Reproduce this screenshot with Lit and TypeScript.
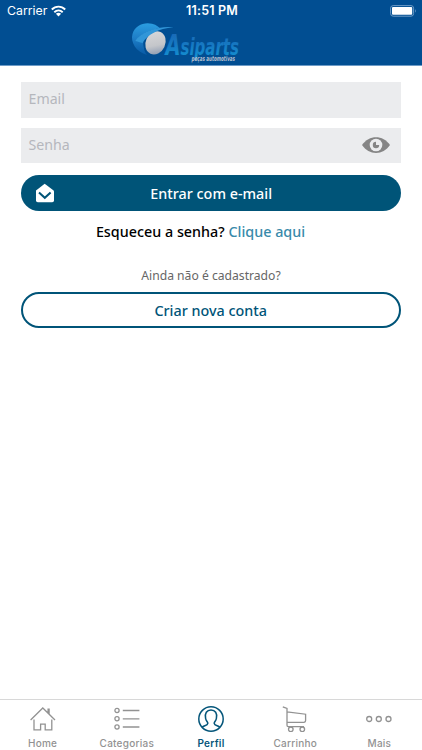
import { LitElement, html, css, svg } from "lit";
import { customElement } from "lit/decorators.js";

const icons = {
  home: svg`<path d="M.6 14 12.800 2 25 14M18.100 7V3.200h1V8.200M4 13.500v10.300h6.600v-5.600h4.600v5.600h6.600V13.500"/>`,
  list: svg`<circle cx="3" cy="4.5" r="2.1"/><circle cx="3" cy="12.8" r="2.1"/><circle cx="3" cy="21" r="2.1"/><path d="M8.800 4.500h16.600M8.800 12.800h16.600M8.800 21h16.600"/>`,
  user: svg`<circle cx="13" cy="13" r="12.2"/><path d="M4.200 21.200c1.500-1.700 5.300-1.500 5.600-3.900.1-1.300-1.700-2.300-2.200-5C6.600 7.300 8.700 4 13 4s6.400 3.300 5.400 8.300c-.5 2.700-2.300 3.700-2.200 5 .3 2.400 4.100 2.200 5.600 3.900"/>`,
  cart: svg`<path d="M.8 .8 5 2.400V19.300Q5 20.600 6.300 20.600H22M5 5.800 23.600 8.200V14.600Q23.600 16.200 22 16.400H5"/><circle cx="8.800" cy="23.300" r="2.300"/><circle cx="20.300" cy="23.300" r="2.300"/>`,
  more: svg`<circle cx="3.200" cy="13" r="2.500"/><circle cx="12.800" cy="13" r="2.500"/><circle cx="22.500" cy="13" r="2.500"/>`,
};

const tabs = [
  { key: "home", label: "Home", icon: icons.home },
  { key: "categories", label: "Categorias", icon: icons.list },
  { key: "profile", label: "Perfil", icon: icons.user },
  { key: "cart", label: "Carrinho", icon: icons.cart },
  { key: "more", label: "Mais", icon: icons.more },
];

@customElement("app-root")
export class AppRoot extends LitElement {
  static styles = css`
    :host {
      display: flex;
      flex-direction: column;
      height: 100vh;
      background: #fff;
      font-family: "Noto Sans", "Open Sans", sans-serif;
    }
    * { box-sizing: border-box; }
    svg { display: block; flex: none; }
    header {
      height: 66px;
      background: #014e92;
      border-bottom: 1px solid #6d9bc7;
      color: #fff;
      flex: none;
    }
    .status {
      height: 21px;
      display: grid;
      grid-template-columns: 1fr auto 1fr;
      align-items: center;
      padding: 1px 5px 0 7px;
      font: 12.300px/20px Inter, sans-serif;
    }
    .carrier { display: flex; align-items: center; gap: 4px; }
    .carrier svg { margin-top: -1px; }
    .time { font-weight: 600; font-size: 12.500px; letter-spacing: 0.200px; }
    .battery { justify-self: end; }
    .logo { margin: 0 auto; position: relative; left: -25px; overflow: visible; }
    main { flex: 1; padding: 16px 21px 0; display: flex; flex-direction: column; }
    .field {
      height: 35.500px;
      background: #ebecee;
      color: #b5b7bd;
      font-size: 14.200px;
      display: flex;
      align-items: center;
      justify-content: space-between;
      padding: 0 10px 2px 7.500px;
      margin-bottom: 10px;
    }
    .field svg { margin-top: 2px; }
    .button {
      height: 36px;
      border-radius: 18px;
      display: flex;
      align-items: center;
      justify-content: center;
      font-size: 14.350px;
      font-weight: 500;
      width: 380.400px;
    }
    .primary {
      background: #005478;
      color: #fff;
      margin-top: 2px;
      display: grid;
      grid-template-columns: 48px 1fr 48px;
      text-align: center;
    }
    .mail { margin-left: 14px; margin-top: -1px; }
    .outline { border: 2px solid #005478; color: #005478; margin-top: 7px; padding-right: 1px; }
    .forgot { margin: 10px 21px 0 0; text-align: center; font-size: 14.350px; line-height: 21px; font-weight: 500; }
    .link { color: #398aaa; }
    .hint { margin-top: 25px; text-align: center; font-size: 12.150px; line-height: 18px; color: #666; }
    nav {
      height: 51px;
      border-top: 1px solid #d8d8d8;
      display: grid;
      grid-template-columns: repeat(5, 84.200px);
      justify-content: center;
      flex: none;
    }
    .tab {
      display: flex;
      flex-direction: column;
      align-items: center;
      padding-top: 6px;
      gap: 4px;
      color: #929292;
      font: 500 10px/14px Inter, sans-serif;
      letter-spacing: 0.250px;
    }
    .active { color: #05567a; font-weight: 600; }
    .glyph { fill: none; stroke: currentColor; stroke-width: 1.300; }
    .active .glyph { stroke-width: 1.500; }
    .brand {
      font-family: "DejaVu Sans Condensed", "DejaVu Sans", sans-serif;
      font-stretch: condensed;
      font-weight: 700;
      font-style: italic;
    }
  `;

  render() {
    return html`
      <header>
        <div class="status">
          <div class="carrier">
            <span>Carrier</span>
            <svg width="15" height="12" viewBox="0 0 15 12" fill="none" stroke="#fff" stroke-width="1.900">
              <path d="M.8 4.500C4.600.6 10.400.6 14.200 4.500M3.300 7.200c2.500-2.400 5.900-2.400 8.400 0"/>
              <path fill="#fff" stroke="none" d="M4.900 8.700q2.600-2 5.200 0L7.500 11.400z"/>
            </svg>
          </div>
          <span class="time">11:51 PM</span>
          <svg class="battery" width="27" height="12" viewBox="0 0 27 12">
            <rect x=".6" y=".6" width="23" height="10.600" rx="2.600" fill="none" stroke="#6d9bc7"/>
            <rect x="2" y="2" width="20.200" height="7.800" rx="1" fill="#fff"/>
            <path d="M25 4q1.800 1.900 0 3.800z" fill="#6d9bc7"/>
          </svg>
        </div>
        <svg class="logo" width="110" height="44" viewBox="0 0 110 44">
          <defs>
            <linearGradient id="blue" x2="0" y2="1"><stop stop-color="#2b9de0"/><stop offset=".5" stop-color="#1d7cc6"/><stop offset="1" stop-color="#0759a4"/></linearGradient>
            <linearGradient id="word" x2="0" y2="1"><stop stop-color="#1b62b0"/><stop offset=".5" stop-color="#1678c2"/><stop offset="1" stop-color="#1398d6"/></linearGradient>
            <linearGradient id="silver" x1=".2" y1="0" x2=".8" y2="1"><stop stop-color="#d8d8da"/><stop offset=".6" stop-color="#c4c6ca"/><stop offset="1" stop-color="#8797b0"/></linearGradient>
          </defs>
          <path fill="url(#blue)" d="M16 34C5 31-.8 21 1.500 13 4 4.500 13 .8 21 2.800c4.500 1.100 8 3.700 9.500 6.700L24 12C17 13 12.500 17 12.500 23c0 4 1 8 3.500 11z"/>
          <path fill="#014e92" d="M4 20C12 11 25 5.500 42.500 6 36 8 34 11 35 16L25 33C17 35 12 29 12.500 21z"/>
          <ellipse cx="24.500" cy="21.800" rx="9.800" ry="12" fill="url(#silver)" transform="rotate(25 24.500 21.800)"/>
          <path d="M4 20C10 11 25 5 42.500 6 27 8 17 13 11.500 22z" fill="#3196d8"/>
          <g class="brand">
            <text x="34.500" y="33.500" textLength="73.500" lengthAdjust="spacingAndGlyphs" font-size="22.500" fill="url(#word)"><tspan font-size="29">A</tspan>siparts</text>
            <text x="60.500" y="40.300" textLength="43.500" lengthAdjust="spacingAndGlyphs" font-size="7" fill="#b5bfce">peças automotivas</text>
          </g>
        </svg>
      </header>
      <main>
        <div class="field">Email</div>
        <div class="field">
          <span>Senha</span>
          <svg width="30" height="18" viewBox="0 0 30 18">
            <path fill="#858585" d="M1 9C8-1.500 22-1.500 29 9 22 19.500 8 19.500 1 9z"/>
            <circle cx="15" cy="9" r="6.300" fill="#ebecee"/>
            <path d="M15 5.800A3.200 3.200 0 1 0 18.200 9H15z" fill="#858585"/>
          </svg>
        </div>
        <div class="button primary">
          <svg class="mail" width="20" height="20" viewBox="0 0 20 20">
            <path fill="#fff" d="M1 7.400 9.700.8 18.600 7.400Q19 8 19 8.500V17.500Q19 19.300 17.200 19.300H2.800Q1 19.300 1 17.500z"/>
            <path d="M4 9.500 9.800 14.800 15.600 9.500" fill="none" stroke="#005478" stroke-width="2"/>
          </svg>
          <span>Entrar com e-mail</span>
        </div>
        <div class="forgot">Esqueceu a senha? <span class="link">Clique aqui</span></div>
        <div class="hint">Ainda não é cadastrado?</div>
        <div class="button outline">Criar nova conta</div>
      </main>
      <nav>
        ${tabs.map((t) => html`
          <div class="tab ${t.key === "profile" ? "active" : ""}">
            <svg class="glyph" width="26" height="26" viewBox="0 0 26 26">${t.icon}</svg>
            <span>${t.label}</span>
          </div>`)}
      </nav>
    `;
  }
}
